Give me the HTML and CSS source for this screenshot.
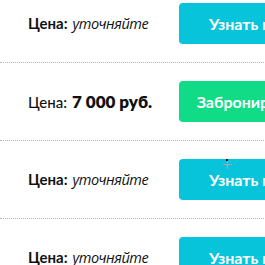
FILE: index.html
```html
<!DOCTYPE html>
<html lang="ru">
<head>
<meta charset="utf-8">
<link rel="stylesheet" href="styles.css">
</head>
<body>
<div class="list">
  <div class="row">
    <div class="price"><span class="label">Цена:</span> <span class="ask">уточняйте</span></div>
    <a class="btn btn-cyan">Узнать цену</a>
  </div>
  <div class="row">
    <div class="price"><span class="label label-light">Цена:</span> <span class="sum">7 000 руб.</span></div>
    <a class="btn btn-green">Забронировать</a>
  </div>
  <div class="row">
    <div class="price"><span class="label">Цена:</span> <span class="ask">уточняйте</span></div>
    <a class="btn btn-cyan">Узнать цену</a>
  </div>
  <div class="row">
    <div class="price"><span class="label">Цена:</span> <span class="ask">уточняйте</span></div>
    <a class="btn btn-cyan">Узнать цену</a>
  </div>
</div>
<div class="cursor"><span class="ch"></span><span class="cv"></span><span class="cdot"></span></div>
</body>
</html>
```
FILE: styles.css
```css
html, body {
  margin: 0;
  padding: 0;
  background: #fff;
  overflow: hidden;
  width: 265px;
  height: 265px;
}
body {
  font-family: Lato, "Open Sans", sans-serif;
  color: #111;
  position: relative;
}
.list {
  margin-top: -15px;
  width: 340px;
}
.row {
  display: flex;
  align-items: center;
  padding: 18px 0;
  border-bottom: 1px dotted #b5b5b5;
  white-space: nowrap;
}
.price {
  width: 179px;
  padding-left: 28px;
  box-sizing: border-box;
  display: flex;
  align-items: baseline;
  gap: 5px;
  flex: none;
}
.label {
  font-weight: 700;
  font-size: 15px;
}
.label-light {
  font-weight: 500;
}
.ask {
  font-family: "Open Sans", "Noto Sans", sans-serif;
  font-style: italic;
  font-size: 14.5px;
  letter-spacing: -0.5px;
}
.sum {
  font-weight: 800;
  font-size: 17px;
}
.btn {
  flex: none;
  width: 149px;
  height: 41px;
  border-radius: 4px;
  display: flex;
  align-items: center;
  justify-content: center;
  color: #fff;
  font-weight: 700;
  font-size: 16px;
}
.btn-cyan { background: #08c4da; }
.btn-green { background: #10dc88; }
.cursor {
  position: absolute;
  left: 223px;
  top: 160px;
  width: 9px;
  height: 9px;
  z-index: 2;
}
.ch {
  position: absolute;
  left: 0;
  top: 4px;
  width: 9px;
  height: 1px;
  background: #e98a9a;
}
.cv {
  position: absolute;
  left: 4px;
  top: 0;
  width: 1px;
  height: 9px;
  background: #e98a9a;
}
.cdot {
  position: absolute;
  left: 3px;
  top: -1px;
  width: 2px;
  height: 2px;
  background: #000;
}
```
